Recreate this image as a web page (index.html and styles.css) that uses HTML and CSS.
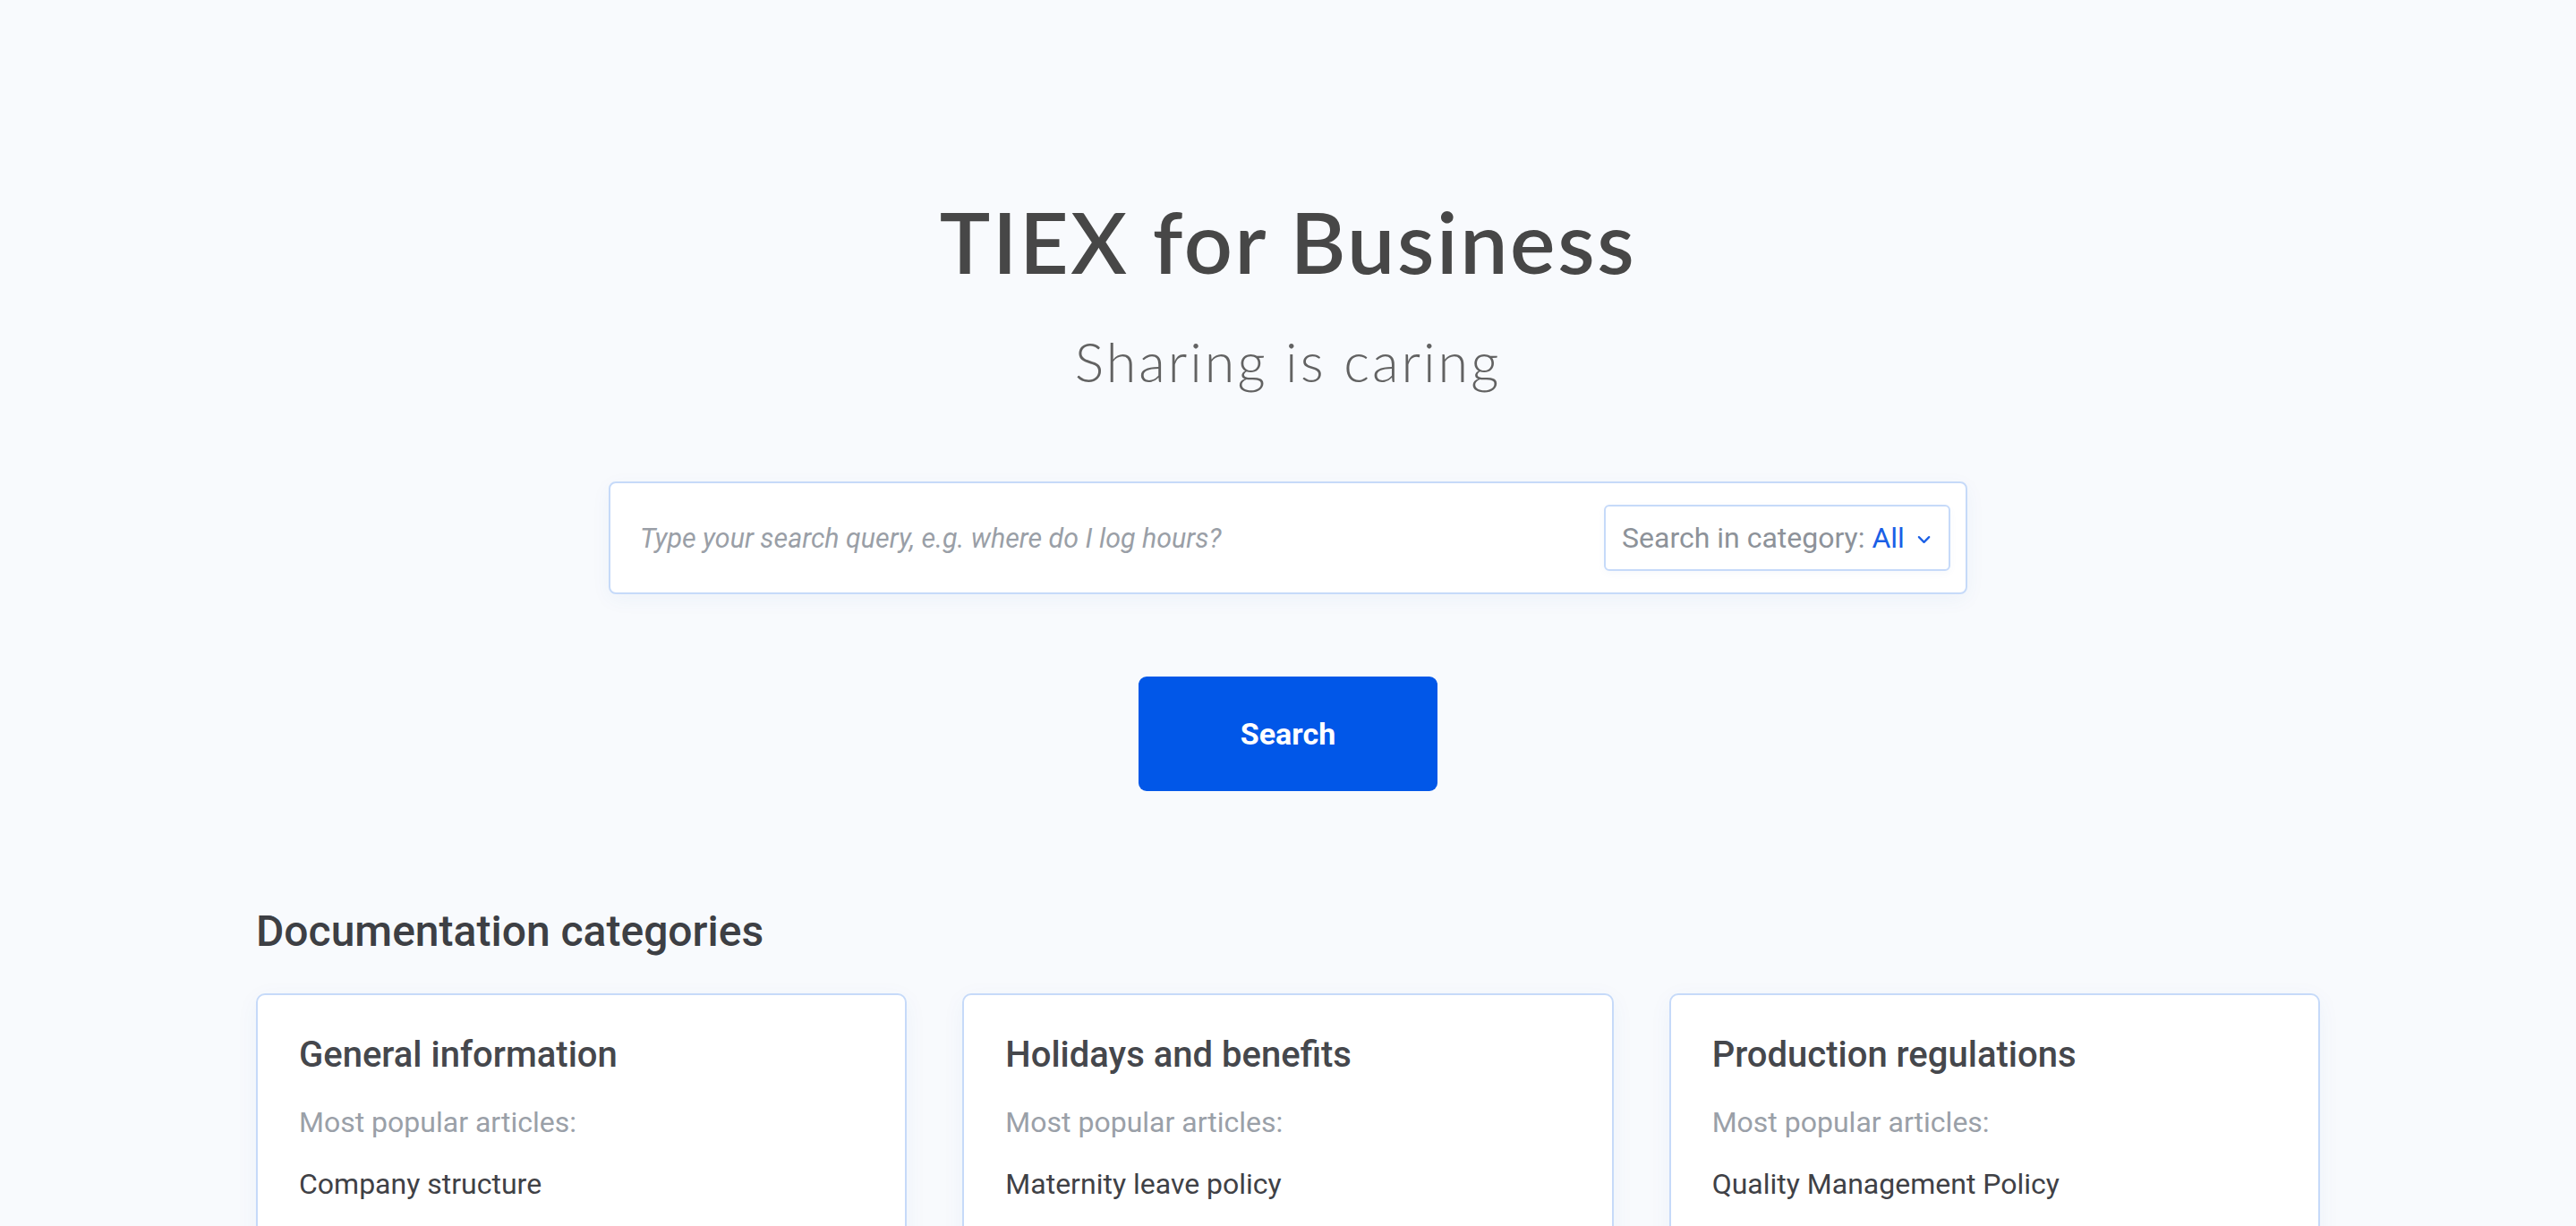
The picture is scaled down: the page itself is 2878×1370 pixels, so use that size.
FILE: index.html
```html
<!DOCTYPE html>
<html lang="en">
<head>
<meta charset="utf-8">
<title>TIEX for Business</title>
<link rel="stylesheet" href="styles.css">
</head>
<body>
<main class="page">
  <header class="hero">
    <h1 class="title">TIEX for Business</h1>
    <p class="subtitle">Sharing is caring</p>
    <form class="search">
      <input class="search-input" type="text" placeholder="Type your search query, e.g. where do I log hours?">
      <div class="category">
        <span class="category-label">Search in category:</span>
        <span class="category-value">All</span>
        <svg class="chevron" width="16" height="10" viewBox="0 0 16 10"><polyline points="2,2 8,8 14,2" fill="none" stroke="#1a5fe6" stroke-width="2.4" stroke-linecap="round" stroke-linejoin="round"/></svg>
      </div>
    </form>
    <button class="search-btn" type="button">Search</button>
  </header>

  <section class="categories">
    <h2 class="section-title">Documentation categories</h2>
    <div class="grid">
      <article class="card">
        <h3 class="card-title">General information</h3>
        <p class="card-label">Most popular articles:</p>
        <ul class="articles"><li>Company structure</li></ul>
      </article>
      <article class="card">
        <h3 class="card-title">Holidays and benefits</h3>
        <p class="card-label">Most popular articles:</p>
        <ul class="articles"><li>Maternity leave policy</li></ul>
      </article>
      <article class="card">
        <h3 class="card-title">Production regulations</h3>
        <p class="card-label">Most popular articles:</p>
        <ul class="articles"><li>Quality Management Policy</li></ul>
      </article>
    </div>
  </section>
</main>
</body>
</html>
```

FILE: styles.css
```css
* { box-sizing: border-box; }

html, body {
  margin: 0;
  padding: 0;
  background: #f8fafd;
}

body {
  font-family: Roboto, "Liberation Sans", Arial, sans-serif;
  color: #3f4146;
}

.page {
  display: flex;
  flex-direction: column;
  align-items: center;
}

.hero {
  display: flex;
  flex-direction: column;
  align-items: center;
  padding-top: 212px;
}

.title {
  margin: 0;
  font-family: Lato, "Open Sans", sans-serif;
  font-weight: 600;
  font-size: 95px;
  line-height: 114px;
  color: #474747;
  letter-spacing: 2.6px;
}

.subtitle {
  margin: 41px 0 0;
  font-family: Lato, "Open Sans", sans-serif;
  font-weight: 300;
  font-size: 61px;
  line-height: 73px;
  color: #626262;
  letter-spacing: 3px;
}

.search {
  margin: 98px 0 0;
  width: 1518px;
  height: 126px;
  display: flex;
  align-items: center;
  padding: 0 17px 0 33px;
  background: #ffffff;
  border: 2px solid #c6daf9;
  border-radius: 8px;
  box-shadow: 0 6px 22px rgba(40, 90, 170, 0.05);
}

.search-input {
  flex: 1;
  border: 0;
  outline: none;
  background: transparent;
  padding: 0;
  font-family: Roboto, sans-serif;
  font-style: italic;
  font-size: 30.4px;
  color: #3f4146;
}

.search-input::placeholder {
  color: #9a9fa7;
  opacity: 1;
}

.category {
  height: 74px;
  width: 387px;
  display: flex;
  align-items: center;
  padding: 0 20px 0 18px;
  border: 2px solid #c6daf9;
  border-radius: 6px;
  background: #ffffff;
  box-shadow: 0 3px 8px rgba(40, 90, 170, 0.04);
  font-size: 32px;
  white-space: nowrap;
}

.category-label {
  color: #8d9299;
}

.category-value {
  color: #1a5fe6;
  margin-left: 8px;
}

.chevron {
  margin-left: 14px;
  margin-top: 4px;
}

.search-btn {
  margin-top: 92px;
  width: 334px;
  height: 128px;
  border: 0;
  border-radius: 9px;
  background: #0157e8;
  color: #ffffff;
  font-family: Roboto, sans-serif;
  font-weight: 700;
  font-size: 34px;
  cursor: pointer;
}

.categories {
  width: 2306px;
  margin-top: 129px;
}

.section-title {
  margin: 0;
  font-weight: 500;
  font-size: 48px;
  line-height: 56px;
  color: #3d3f44;
}

.grid {
  margin-top: 41px;
  display: grid;
  grid-template-columns: repeat(3, 1fr);
  gap: 62px;
}

.card {
  background: #ffffff;
  border: 2px solid #c6daf9;
  border-radius: 10px;
  padding: 43px 46px 60px;
  box-shadow: 0 6px 26px rgba(40, 90, 170, 0.05);
}

.card-title {
  margin: 0;
  font-weight: 500;
  font-size: 40px;
  line-height: 47px;
  color: #45474c;
}

.card-label {
  margin: 33px 0 0;
  font-size: 32px;
  line-height: 38px;
  color: #9aa0a8;
}

.articles {
  list-style: none;
  margin: 31px 0 0;
  padding: 0;
}

.articles li {
  font-size: 32px;
  line-height: 38px;
  color: #3f4146;
}
```
